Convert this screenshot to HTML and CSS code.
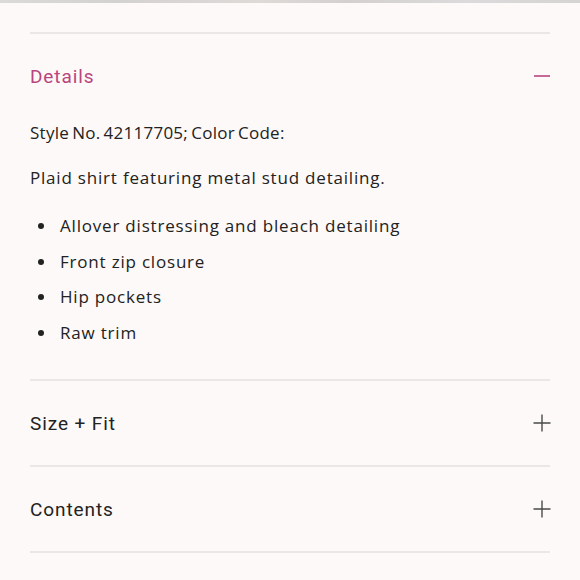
FILE: index.html
```html
<!DOCTYPE html>
<html lang="en">
<head>
<meta charset="utf-8">
<link rel="stylesheet" href="styles.css">
</head>
<body>
<div class="image-edge"></div>
<div class="accordion">
  <section class="item open">
    <div class="item-head">
      <h2 class="title active">Details</h2>
      <svg class="icon" width="18" height="18" viewBox="0 0 18 18"><path d="M1 9H17" stroke="#b8457e" stroke-width="1.6"/></svg>
    </div>
    <div class="item-body">
      <p class="style-no">Style No. 42117705; Color Code:</p>
      <p>Plaid shirt featuring metal stud detailing.</p>
      <ul>
        <li>Allover distressing and bleach detailing</li>
        <li>Front zip closure</li>
        <li>Hip pockets</li>
        <li>Raw trim</li>
      </ul>
    </div>
  </section>
  <section class="item">
    <div class="item-head">
      <h2 class="title">Size + Fit</h2>
      <svg class="icon" width="18" height="18" viewBox="0 0 18 18"><path d="M0.5 9H17.5M9 0.5V17.5" stroke="#4a4a4a" stroke-width="1.4"/></svg>
    </div>
  </section>
  <section class="item">
    <div class="item-head">
      <h2 class="title">Contents</h2>
      <svg class="icon" width="18" height="18" viewBox="0 0 18 18"><path d="M0.5 9H17.5M9 0.5V17.5" stroke="#4a4a4a" stroke-width="1.4"/></svg>
    </div>
  </section>
  <div class="end-line"></div>
</div>
</body>
</html>
```
FILE: styles.css
```css
html, body {
  margin: 0;
  padding: 0;
  background: #fdf9f8;
}
body {
  font-family: "Open Sans", "Liberation Sans", sans-serif;
  color: #222;
}
.image-edge {
  height: 3px;
  background: linear-gradient(90deg, #dcd9d9 0%, #d4d1d1 20%, #dedad8 45%, #d3d0cf 60%, #dcdada 80%, #d6d3d3 100%);
}
.accordion {
  padding: 29px 30px 0;
}
.item {
  border-top: 2px solid #ebe7e6;
}
.item-head {
  box-sizing: border-box;
  height: 84px;
  padding-top: 1px;
  display: flex;
  align-items: center;
  justify-content: space-between;
}
.item.open .item-head {
  padding-top: 0;
}
.title {
  margin: 0;
  font-family: Roboto, "Liberation Sans", sans-serif;
  font-weight: 400;
  font-size: 19px;
  letter-spacing: 0.9px;
  color: #222;
}
.title.active {
  color: #b8457e;
}
.icon {
  display: block;
  margin-right: -1px;
}
.item-body {
  padding: 3px 0 34px;
  font-size: 17px;
  letter-spacing: 0.8px;
  line-height: 24px;
}
.item-body p {
  margin: 0 0 21px;
}
.item-body .style-no {
  letter-spacing: 0.25px;
  word-spacing: -1.5px;
}
.item-body ul {
  margin: 24px 0 0;
  padding: 0 0 0 30px;
  list-style: none;
  display: flex;
  flex-direction: column;
  gap: 11.5px;
}
.item-body li {
  position: relative;
}
.item-body li::before {
  content: "";
  position: absolute;
  left: -22px;
  top: 9px;
  width: 6px;
  height: 6px;
  border-radius: 50%;
  background: #222;
}
.end-line {
  border-top: 2px solid #ebe7e6;
}
```
